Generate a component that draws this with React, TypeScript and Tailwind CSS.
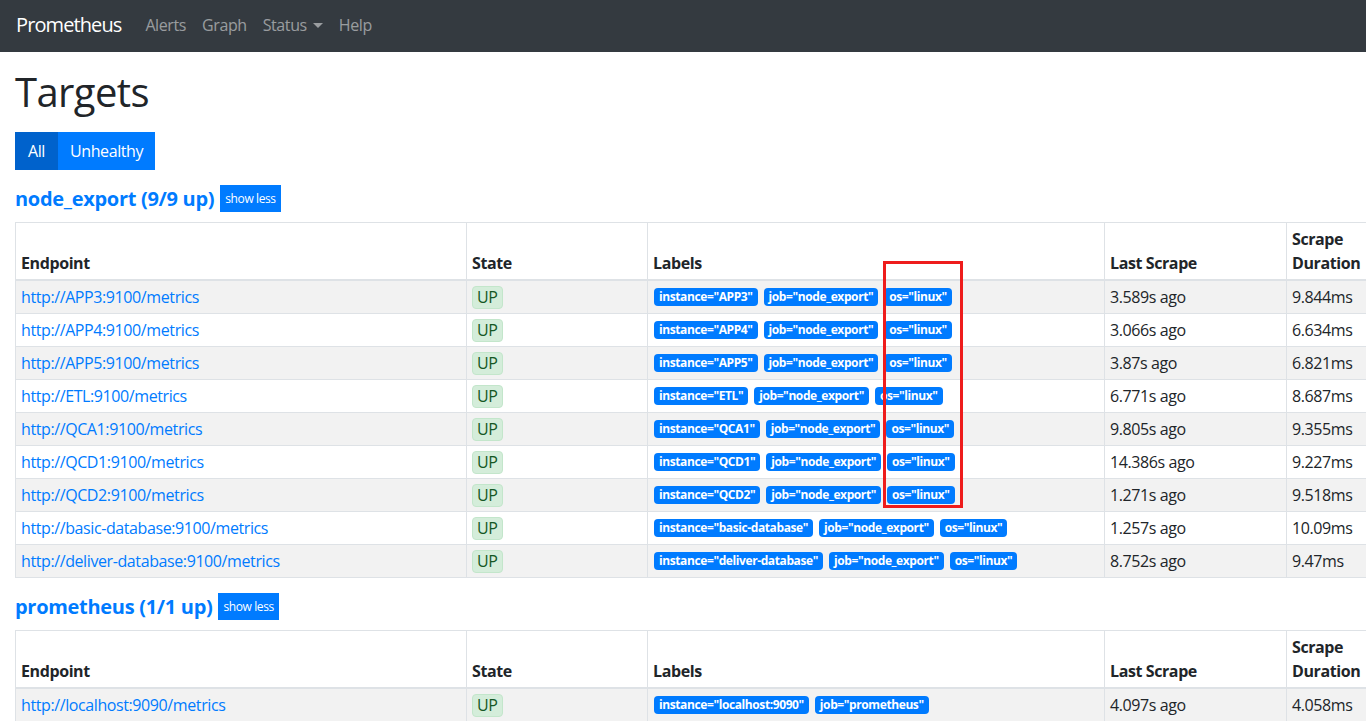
const nodeRows = [
  ["http://APP3:9100/metrics", "APP3", "3.589s ago", "9.844ms"],
  ["http://APP4:9100/metrics", "APP4", "3.066s ago", "6.634ms"],
  ["http://APP5:9100/metrics", "APP5", "3.87s ago", "6.821ms"],
  ["http://ETL:9100/metrics", "ETL", "6.771s ago", "8.687ms"],
  ["http://QCA1:9100/metrics", "QCA1", "9.805s ago", "9.355ms"],
  ["http://QCD1:9100/metrics", "QCD1", "14.386s ago", "9.227ms"],
  ["http://QCD2:9100/metrics", "QCD2", "1.271s ago", "9.518ms"],
  ["http://basic-database:9100/metrics", "basic-database", "1.257s ago", "10.09ms"],
  ["http://deliver-database:9100/metrics", "deliver-database", "8.752s ago", "9.47ms"],
];

type Row = { url: string; labels: string[]; last: string; dur: string };

function Badge({ text }: { text: string }) {
  return (
    <span className="inline-block rounded-[4px] bg-[#007bff] px-[5px] py-[3px] text-[12px] font-bold leading-[12px] tracking-[-0.4px] text-white whitespace-nowrap">
      {text}
    </span>
  );
}

function TargetTable({ rows }: { rows: Row[] }) {
  return (
    <table className="w-[1351px] table-fixed border-collapse border border-[#dee2e6] text-[16px] text-[#212529]">
      <colgroup>
        <col className="w-[451px]" />
        <col className="w-[181px]" />
        <col className="w-[457px]" />
        <col className="w-[182px]" />
        <col className="w-[80px]" />
      </colgroup>
      <thead>
        <tr className="border-b-2 border-[#dee2e6]">
          {["Endpoint", "State", "Labels", "Last Scrape", "Scrape Duration"].map((h) => (
            <th
              key={h}
              className="border-x border-[#dee2e6] px-[5px] py-[4px] text-left align-bottom font-bold leading-[24px]"
            >
              {h}
            </th>
          ))}
        </tr>
      </thead>
      <tbody>
        {rows.map((r, i) => (
          <tr key={r.url} className={i % 2 === 0 ? "h-[33px] bg-[#f2f2f2]" : "h-[33px] bg-white"}>
            <td className="border border-[#dee2e6] px-[5px] py-[4px] leading-[24px]">
              <a className="text-[#007bff]">{r.url}</a>
            </td>
            <td className="border border-[#dee2e6] px-[5px] py-[4px] leading-[24px]">
              <span className="inline-block rounded-[4px] border border-[#c3e6cb] bg-[#d4edda] px-[4px] text-[16px] leading-[21px] text-[#155724]">
                UP
              </span>
            </td>
            <td className="border border-[#dee2e6] px-[6px] py-[4px] leading-[24px]">
              <div className="flex gap-[6px]">
                {r.labels.map((l) => (
                  <Badge key={l} text={l} />
                ))}
              </div>
            </td>
            <td className="border border-[#dee2e6] px-[5px] py-[4px] leading-[24px]">{r.last}</td>
            <td className="border border-[#dee2e6] px-[5px] py-[4px] leading-[24px]">{r.dur}</td>
          </tr>
        ))}
      </tbody>
    </table>
  );
}

function SectionHeader({ title }: { title: string }) {
  return (
    <div className="flex items-center gap-[6px]">
      <span className="text-[20px] font-bold leading-[24px] tracking-[-0.3px] text-[#007bff]">{title}</span>
      <button className="bg-[#007bff] px-[5px] py-[4px] text-[12px] leading-[19px] text-white">show less</button>
    </div>
  );
}

export default function App() {
  const nodes: Row[] = nodeRows.map(([url, inst, last, dur]) => ({
    url,
    labels: [`instance="${inst}"`, 'job="node_export"', 'os="linux"'],
    last,
    dur,
  }));
  const prom: Row[] = [
    {
      url: "http://localhost:9090/metrics",
      labels: ['instance="localhost:9090"', 'job="prometheus"'],
      last: "4.097s ago",
      dur: "4.058ms",
    },
  ];

  return (
    <div className="relative h-[721px] w-[1366px] overflow-hidden bg-white font-['Segoe_UI','Open_Sans',sans-serif] tracking-[-0.4px] text-[#212529]">
      <nav className="flex h-[52px] items-center bg-[#343a40] px-[16px] pb-[2px]">
        <span className="mr-[16px] text-[20px] tracking-[-0.9px] text-white">Prometheus</span>
        <div className="flex text-[16px] text-[rgba(255,255,255,0.5)]">
          <a className="px-[8px]">Alerts</a>
          <a className="px-[8px]">Graph</a>
          <a className="flex items-center px-[8px]">
            Status
            <span className="ml-[6px] inline-block h-0 w-0 border-x-[5px] border-t-[5px] border-x-transparent border-t-[rgba(255,255,255,0.5)]" />
          </a>
          <a className="px-[8px]">Help</a>
        </div>
      </nav>

      <div className="px-[15px] pt-[16px]">
        <h1 className="text-[40px] font-medium leading-[48px] tracking-[-0.6px]">Targets</h1>
        <div className="mt-[16px] flex">
          <button className="bg-[#0062cc] px-[13px] py-[6px] text-[16px] leading-[26px] text-white">All</button>
          <button className="bg-[#007bff] px-[12px] py-[6px] text-[16px] leading-[26px] text-white">Unhealthy</button>
        </div>

        <div className="mt-[15px]">
          <SectionHeader title="node_export (9/9 up)" />
          <div className="mt-[10px]">
            <TargetTable rows={nodes} />
          </div>
        </div>

        <div className="mt-[15px]">
          <SectionHeader title="prometheus (1/1 up)" />
          <div className="mt-[10px]">
            <TargetTable rows={prom} />
          </div>
        </div>
      </div>

      <div className="absolute left-[883px] top-[261px] h-[247px] w-[80px] border-[3px] border-[#ee1c1c]" />
    </div>
  );
}
